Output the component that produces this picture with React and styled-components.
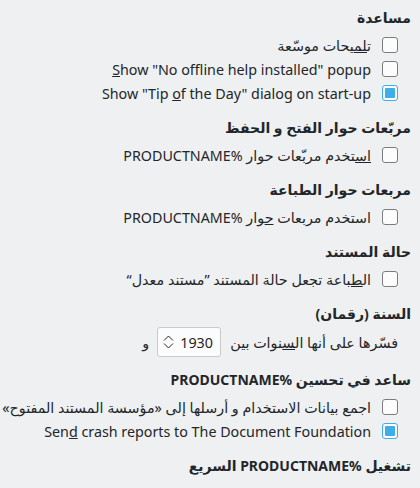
import styled, { createGlobalStyle } from "styled-components";

const GlobalStyle = createGlobalStyle`
  html, body {
    margin: 0;
    padding: 0;
    background: #eff0f1;
  }
  body {
    font-family: "Noto Sans", "DejaVu Sans", sans-serif;
    font-size: 14.3px;
    color: #232629;
  }
`;

const Page = styled.div`
  direction: rtl;
  width: 420px;
  height: 488px;
  overflow: hidden;
  box-sizing: border-box;
  padding: 9px 9px 0 0;
  display: flex;
  flex-direction: column;
  gap: 14px;
`;

const Section = styled.section`
  display: flex;
  flex-direction: column;
  gap: ${(p) => p.$gap || 6}px;
`;

const Heading = styled.h3`
  margin: 0;
  font-size: 14px;
  font-weight: 700;
  line-height: 18px;
`;

const Options = styled.div`
  display: flex;
  flex-direction: column;
  padding-right: 13px;
`;

const Row = styled.label`
  display: flex;
  align-items: center;
  gap: 11px;
  height: 24px;
  white-space: nowrap;
`;

const Box = styled.span`
  width: 16px;
  height: 16px;
  box-sizing: border-box;
  flex-shrink: 0;
  border: 1px solid ${(p) => (p.$checked ? "#3daee9" : "#7b7c7e")};
  border-radius: 3px;
  background: #fcfcfc;
  display: flex;
  align-items: center;
  justify-content: center;
`;

const Mark = styled.span`
  width: 10px;
  height: 10px;
  background: #3daee9;
  border-radius: 1px;
`;

const SpinRow = styled.div`
  display: flex;
  align-items: center;
  gap: 9px;
  padding-right: 13px;
  height: 30px;
  white-space: nowrap;
`;

const SpinBox = styled.div`
  direction: ltr;
  width: 64px;
  height: 30px;
  box-sizing: border-box;
  border: 1px solid #c8cacc;
  border-radius: 3px;
  background: #fcfcfc;
  display: flex;
  align-items: center;
  gap: 6px;
  padding-left: 5px;
  margin-left: -1px;
`;

const And = styled.span``;

function Check({ checked, children }) {
  return (
    <Row>
      <Box $checked={checked}>{checked && <Mark />}</Box>
      <span>{children}</span>
    </Row>
  );
}

function Chevrons() {
  return (
    <svg width="11" height="18" viewBox="0 0 11 18" fill="none" stroke="#232629" strokeWidth="1">
      <path d="M1 7.5 L5.5 3 L10 7.5" />
      <path d="M1 10.5 L5.5 15 L10 10.5" />
    </svg>
  );
}

export default function App() {
  return (
    <>
      <GlobalStyle />
      <Page>
        <Section>
          <Heading>مساعدة</Heading>
          <Options>
            <Check>ت<u>لم</u>يحات موسّعة</Check>
            <Check><u>S</u>how "No offline help installed" popup</Check>
            <Check checked>Show "Tip <u>o</u>f the Day" dialog on start-up</Check>
          </Options>
        </Section>

        <Section>
          <Heading>مربّعات حوار الفتح و الحفظ</Heading>
          <Options>
            <Check><u>اس</u>تخدم مربّعات حوار %PRODUCTNAME</Check>
          </Options>
        </Section>

        <Section>
          <Heading>مربعات حوار الطباعة</Heading>
          <Options>
            <Check>استخدم مربعات <u>ح</u>وار %PRODUCTNAME</Check>
          </Options>
        </Section>

        <Section>
          <Heading>حالة المستند</Heading>
          <Options>
            <Check>ال<u>ط</u>باعة تجعل حالة المستند ”مستند معدل“</Check>
          </Options>
        </Section>

        <Section $gap={4}>
          <Heading>السنة (رقمان)</Heading>
          <SpinRow>
            <span>فسّرها على أنها ال<u>س</u>نوات بين</span>
            <SpinBox>
              <Chevrons />
              <span>1930</span>
            </SpinBox>
            <And>و</And>
          </SpinRow>
        </Section>

        <Section>
          <Heading>ساعد في تحسين %PRODUCTNAME</Heading>
          <Options>
            <Check>اجمع بيانات الاستخدام و أرسلها إلى «مؤسسة المستند المفتوح»</Check>
            <Check checked>Sen<u>d</u> crash reports to The Document Foundation</Check>
          </Options>
        </Section>

        <Section>
          <Heading>تشغيل %PRODUCTNAME السريع</Heading>
        </Section>
      </Page>
    </>
  );
}
